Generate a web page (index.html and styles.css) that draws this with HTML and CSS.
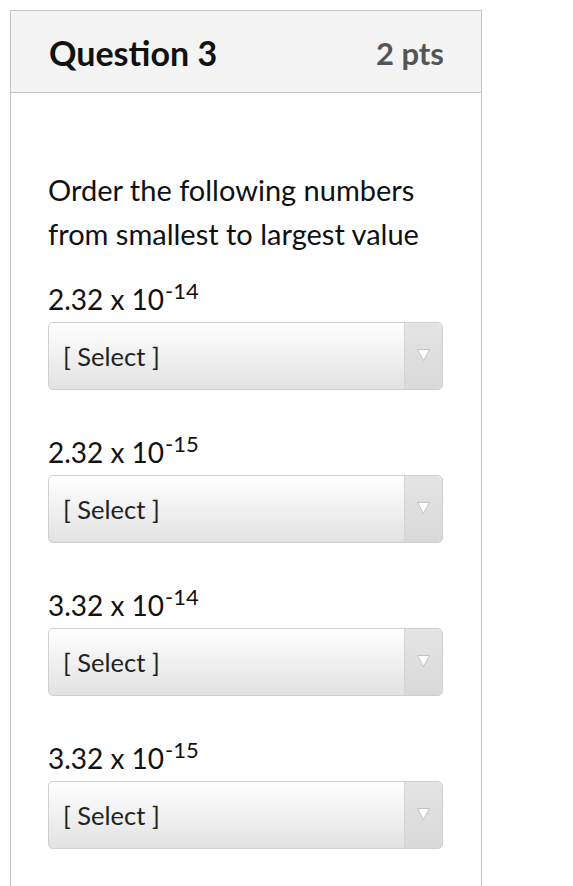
FILE: index.html
```html
<!DOCTYPE html>
<html lang="en">
<head>
<meta charset="utf-8">
<title>Question 3</title>
<link rel="stylesheet" href="styles.css">
</head>
<body>
<div class="card">
  <div class="card-header">
    <span class="title">Question 3</span>
    <span class="points">2 pts</span>
  </div>
  <div class="card-body">
    <p class="prompt">Order the following numbers from smallest to largest value</p>
    <div class="item">
      <div class="label">2.32 x 10<sup>-14</sup></div>
      <div class="select"><span class="select-text">[ Select ]</span><span class="select-arrow"><svg width="15" height="14" viewBox="0 0 15 14"><path d="M1.5 1.5 L13.5 1.5 L7.5 12.5 Z" fill="#fff" stroke="#bdbdbd" stroke-width="0.9" stroke-linejoin="round"/></svg></span></div>
    </div>
    <div class="item">
      <div class="label">2.32 x 10<sup>-15</sup></div>
      <div class="select"><span class="select-text">[ Select ]</span><span class="select-arrow"><svg width="15" height="14" viewBox="0 0 15 14"><path d="M1.5 1.5 L13.5 1.5 L7.5 12.5 Z" fill="#fff" stroke="#bdbdbd" stroke-width="0.9" stroke-linejoin="round"/></svg></span></div>
    </div>
    <div class="item">
      <div class="label">3.32 x 10<sup>-14</sup></div>
      <div class="select"><span class="select-text">[ Select ]</span><span class="select-arrow"><svg width="15" height="14" viewBox="0 0 15 14"><path d="M1.5 1.5 L13.5 1.5 L7.5 12.5 Z" fill="#fff" stroke="#bdbdbd" stroke-width="0.9" stroke-linejoin="round"/></svg></span></div>
    </div>
    <div class="item">
      <div class="label">3.32 x 10<sup>-15</sup></div>
      <div class="select"><span class="select-text">[ Select ]</span><span class="select-arrow"><svg width="15" height="14" viewBox="0 0 15 14"><path d="M1.5 1.5 L13.5 1.5 L7.5 12.5 Z" fill="#fff" stroke="#bdbdbd" stroke-width="0.9" stroke-linejoin="round"/></svg></span></div>
    </div>
  </div>
</div>
</body>
</html>
```
FILE: styles.css
```css
html, body {
  margin: 0;
  padding: 0;
  background: #fff;
}
body {
  font-family: Lato, "Open Sans", sans-serif;
  color: #111;
  height: 886px;
  overflow: hidden;
}
.card {
  margin: 10px 0 0 10px;
  width: 472px;
  border: 1px solid #c4c4c4;
  border-bottom: none;
  height: 900px;
  box-sizing: border-box;
}
.card-header {
  height: 82px;
  background: #f4f4f4;
  border-bottom: 1px solid #c4c4c4;
  display: flex;
  align-items: center;
  justify-content: space-between;
  padding: 0 37px 0 38px;
  box-sizing: border-box;
}
.title {
  font-weight: 700;
  font-size: 34px;
  color: #111;
  margin-top: 2px;
}
.points {
  font-weight: 700;
  font-size: 31px;
  color: #555;
  margin-top: 2px;
}
.card-body {
  padding: 75px 38px 0 37px;
}
.prompt {
  margin: 0;
  font-size: 29px;
  line-height: 44px;
}
.item {
  margin-top: 23px;
}
.item + .item {
  margin-top: 42px;
}
.label {
  font-size: 28px;
  line-height: 41px;
  height: 41px;
}
.label sup {
  font-size: 22px;
  line-height: 0;
  vertical-align: 0;
  position: relative;
  top: -11px;
  margin-left: 1px;
}
.select {
  margin-top: 2px;
  height: 68px;
  box-sizing: border-box;
  border: 1px solid #cfcfcf;
  border-radius: 5px;
  background: linear-gradient(#ffffff, #e2e2e2);
  display: flex;
  align-items: stretch;
  overflow: hidden;
}
.select-text {
  flex: 1;
  display: flex;
  align-items: center;
  padding-left: 14px;
  font-size: 25.5px;
  color: #222;
}
.select-arrow {
  width: 37px;
  border-left: 1px solid #d4d4d4;
  background: linear-gradient(#e4e4e4, #d9d9d9);
  display: flex;
  align-items: center;
  justify-content: center;
  padding-bottom: 2px;
}
```
